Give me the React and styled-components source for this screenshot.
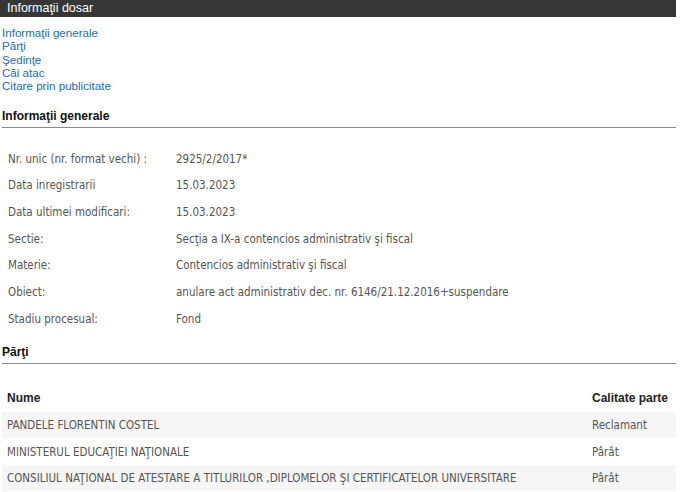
import React from "react";
import styled, { createGlobalStyle } from "styled-components";

const GlobalStyle = createGlobalStyle`
  body {
    margin: 0;
    background: #fff;
    font-family: "Liberation Sans", Arial, sans-serif;
  }
`;

const Page = styled.div`
  width: 676px;
`;

const TitleBar = styled.div`
  height: 17px;
  background: #363636;
  color: #fff;
  font-size: 12.5px;
  line-height: 17px;
  padding-left: 7px;
`;

const Links = styled.div`
  display: flex;
  flex-direction: column;
  padding: 9px 0 0 2px;
`;

const NavLink = styled.a`
  color: #1a6db3;
  text-decoration: none;
  font-size: 11.6px;
  line-height: 13.25px;
`;

const SectionTitle = styled.h3`
  margin: ${(p) => p.$top}px 0 0 2px;
  padding-bottom: 3px;
  font-size: 12px;
  font-weight: bold;
  color: #111;
  line-height: 15px;
  border-bottom: 1px solid #8a8a8a;
`;

const InfoList = styled.div`
  display: flex;
  flex-direction: column;
  padding: 17px 0 0 8px;
`;

const InfoRow = styled.div`
  display: grid;
  grid-template-columns: 168px 1fr;
  height: 26.67px;
  align-items: center;
  font-family: "DejaVu Sans Condensed", "DejaVu Sans", sans-serif;
  font-size: 11.5px;
  color: #555;
`;

const Table = styled.table`
  margin: 20.5px 0 0 2px;
  width: 674px;
  border-collapse: collapse;
`;

const Th = styled.th`
  text-align: left;
  font-size: 12px;
  font-weight: bold;
  color: #222;
  height: 27px;
  padding: 0 0 0 5px;
`;

const Tr = styled.tr`
  background: ${(p) => (p.$shade ? "#f6f6f6" : "#fff")};
`;

const Td = styled.td`
  height: 26.5px;
  padding: 0 0 0 5px;
  font-family: "DejaVu Sans Condensed", "DejaVu Sans", sans-serif;
  font-size: 11.5px;
  color: #555;
  width: ${(p) => p.$w || "auto"};
`;

const info = [
  ["Nr. unic (nr. format vechi) :", "2925/2/2017*"],
  ["Data inregistrarii", "15.03.2023"],
  ["Data ultimei modificari:", "15.03.2023"],
  ["Sectie:", "Secţia a IX-a contencios administrativ şi fiscal"],
  ["Materie:", "Contencios administrativ şi fiscal"],
  ["Obiect:", "anulare act administrativ dec. nr. 6146/21.12.2016+suspendare"],
  ["Stadiu procesual:", "Fond"],
];

const parti = [
  ["PANDELE FLORENTIN COSTEL", "Reclamant"],
  ["MINISTERUL EDUCAŢIEI NAŢIONALE", "Pârât"],
  [
    "CONSILIUL NAŢIONAL DE ATESTARE A TITLURILOR ,DIPLOMELOR ŞI CERTIFICATELOR UNIVERSITARE",
    "Pârât",
  ],
];

export default function App() {
  return (
    <Page>
      <GlobalStyle />
      <TitleBar>Informaţii dosar</TitleBar>
      <Links>
        <NavLink href="#">Informaţii generale</NavLink>
        <NavLink href="#">Părţi</NavLink>
        <NavLink href="#">Şedinţe</NavLink>
        <NavLink href="#">Căi atac</NavLink>
        <NavLink href="#">Citare prin publicitate</NavLink>
      </Links>

      <SectionTitle $top={17}>Informaţii generale</SectionTitle>
      <InfoList>
        {info.map(([label, value]) => (
          <InfoRow key={label}>
            <span>{label}</span>
            <span>{value}</span>
          </InfoRow>
        ))}
      </InfoList>

      <SectionTitle $top={13.5}>Părţi</SectionTitle>
      <Table>
        <thead>
          <tr>
            <Th>Nume</Th>
            <Th>Calitate parte</Th>
          </tr>
        </thead>
        <tbody>
          {parti.map(([nume, calitate], i) => (
            <Tr key={nume} $shade={i % 2 === 0}>
              <Td>{nume}</Td>
              <Td $w="84px">{calitate}</Td>
            </Tr>
          ))}
        </tbody>
      </Table>
    </Page>
  );
}
